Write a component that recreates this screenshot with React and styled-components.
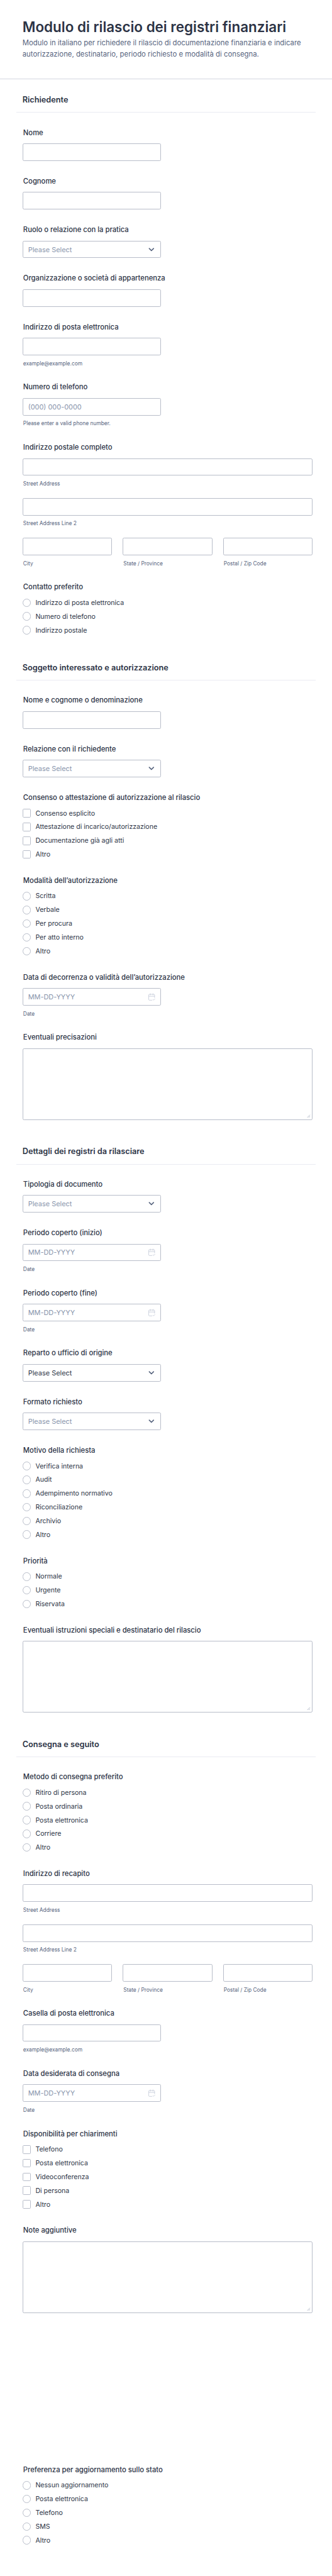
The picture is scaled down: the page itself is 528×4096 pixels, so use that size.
import React from "react";
import styled, { createGlobalStyle } from "styled-components";
import { CalendarCheck2, ChevronDown } from "lucide-react";

// reference px -> window px
const u = (n) => `${(n * 0.5675).toFixed(2)}px`;

const GlobalStyle = createGlobalStyle`
  * { box-sizing: border-box; }
  html, body { margin: 0; padding: 0; background: #fff; }
  body { font-family: "Inter", "Liberation Sans", sans-serif; color: #2c3345; }
`;

const Page = styled.main`
  width: 100%;
  padding-bottom: ${u(76)};
`;

const Header = styled.header`
  padding: ${u(53)} ${u(45)} ${u(51)} ${u(63)};
  border-bottom: 1px solid #d3d6e0;
`;

const Title = styled.h1`
  margin: 0 0 ${u(6.5)};
  font-size: ${u(39.5)};
  line-height: ${u(45)};
  font-weight: 600;
  color: #2c3345;
`;

const Description = styled.p`
  margin: 0;
  font-size: ${u(20)};
  line-height: ${u(32)};
  color: #57647e;
`;

const Form = styled.form`
  display: flex;
  flex-direction: column;
  padding: ${u(16)} ${u(46)} 0 ${u(45)};
`;

const SectionTitle = styled.h2`
  margin: ${u(27.5)} 0 ${u(44.5)};
  padding: 0 0 ${u(19.5)} ${u(18)};
  font-size: ${u(22.4)};
  line-height: ${u(30)};
  font-weight: 600;
  color: #2c3345;
  border-bottom: 1px solid #eaebf2;
`;

const Field = styled.div`
  margin: ${(p) => u(p.$offset || 0)} ${u(8.5)} ${u(45.7)} ${u(18)};
`;

const Label = styled.label`
  display: block;
  margin: 0 0 ${u(17.5)} ${u(2)};
  font-size: ${u(19.8)};
  line-height: ${u(24)};
  font-weight: 500;
  color: #2c3345;
`;

const Hint = styled.div`
  margin: ${u(15.5)} 0 0 ${u(2)};
  padding-bottom: ${u(1)};
  font-size: ${u(14.75)};
  line-height: ${u(16)};
  color: #57647e;
`;

const Control = styled.div`
  display: flex;
  align-items: center;
  justify-content: space-between;
  width: ${(p) => (p.$wide ? "100%" : u(389))};
  height: ${u(49)};
  padding: 0 ${u(14)};
  background: #fff;
  border: 1px solid #b8bdc9;
  border-radius: ${u(4)};
`;

const TextInput = styled.input`
  flex: 1;
  width: 100%;
  min-width: 0;
  height: 100%;
  padding: 0;
  border: 0;
  outline: 0;
  background: transparent;
  font: inherit;
  font-size: ${u(19.3)};
  color: #2c3345;

  &::placeholder {
    color: #8894ab;
    opacity: 1;
  }
`;

const SelectText = styled.span`
  font-size: ${u(19.3)};
  color: ${(p) => (p.$filled ? "#2c3345" : "#8894ab")};
`;

const TextAreaBox = styled.div`
  position: relative;
  height: ${u(201)};
  border: 1px solid #b8bdc9;
  border-radius: ${u(4)};
`;

const TextArea = styled.textarea`
  display: block;
  width: 100%;
  height: 100%;
  border: 0;
  outline: 0;
  resize: none;
  background: transparent;
`;

const Grip = styled.svg`
  position: absolute;
  right: ${u(4)};
  bottom: ${u(4)};
  width: ${u(10)};
  height: ${u(10)};
`;

const AddressRow = styled.div`
  margin-bottom: ${u(30)};
`;

const AddressColumns = styled.div`
  display: grid;
  grid-template-columns: repeat(3, minmax(0, 1fr));
  column-gap: ${u(30)};
`;

const OptionList = styled.div`
  display: flex;
  flex-direction: column;
  gap: ${u(14.5)};
  margin-top: ${u(19)};
  padding-bottom: ${u(4.5)};
`;

const OptionLabel = styled.div`
  display: flex;
  align-items: center;
  gap: ${u(12.5)};
  height: ${u(24)};
  font-size: ${u(18.6)};
  color: #2c3345;
`;

const OptionMark = styled.span`
  flex: none;
  width: ${u(24)};
  height: ${u(24)};
  background: #fff;
  border: 1px solid #b8bdc9;
  border-radius: ${(p) => (p.$round ? "50%" : u(3))};
`;

const GroupLabel = styled(Label)`
  margin-bottom: 0;
`;

const Line = ({ label, hint, placeholder, offset }) => (
  <Field $offset={offset}>
    <Label>{label}</Label>
    <Control>
      <TextInput placeholder={placeholder} aria-label={label} />
    </Control>
    {hint && <Hint>{hint}</Hint>}
  </Field>
);

const Select = ({ label, filled }) => (
  <Field>
    <Label>{label}</Label>
    <Control>
      <SelectText $filled={filled}>Please Select</SelectText>
      <ChevronDown size={13.6} strokeWidth={3} color="#57647e" />
    </Control>
  </Field>
);

const DateField = ({ label }) => (
  <Field>
    <Label>{label}</Label>
    <Control>
      <TextInput placeholder="MM-DD-YYYY" aria-label={label} />
      <CalendarCheck2 size={12.4} strokeWidth={1.6} color="#c3cad8" />
    </Control>
    <Hint>Date</Hint>
  </Field>
);

const Notes = ({ label }) => (
  <Field>
    <Label>{label}</Label>
    <TextAreaBox>
      <TextArea aria-label={label} />
      <Grip viewBox="0 0 10 10">
        <path d="M1 9 9 1M5 9l4-4" stroke="#8894ab" strokeWidth="1" fill="none" />
      </Grip>
    </TextAreaBox>
  </Field>
);

const Options = ({ label, items, round, offset }) => (
  <Field $offset={offset}>
    <GroupLabel>{label}</GroupLabel>
    <OptionList>
      {items.map((item) => (
        <OptionLabel key={item}>
          <OptionMark $round={round} />
          {item}
        </OptionLabel>
      ))}
    </OptionList>
  </Field>
);

const Address = ({ label }) => (
  <Field>
    <Label>{label}</Label>
    <AddressRow>
      <Control $wide>
        <TextInput aria-label="Street Address" />
      </Control>
      <Hint>Street Address</Hint>
    </AddressRow>
    <AddressRow>
      <Control $wide>
        <TextInput aria-label="Street Address Line 2" />
      </Control>
      <Hint>Street Address Line 2</Hint>
    </AddressRow>
    <AddressColumns>
      {["City", "State / Province", "Postal / Zip Code"].map((part) => (
        <div key={part}>
          <Control $wide>
            <TextInput aria-label={part} />
          </Control>
          <Hint>{part}</Hint>
        </div>
      ))}
    </AddressColumns>
  </Field>
);

export default function App() {
  return (
    <Page>
      <GlobalStyle />
      <Header>
        <Title>Modulo di rilascio dei registri finanziari</Title>
        <Description>
          Modulo in italiano per richiedere il rilascio di documentazione finanziaria e indicare
          autorizzazione, destinatario, periodo richiesto e modalità di consegna.
        </Description>
      </Header>
      <Form>
        <SectionTitle>Richiedente</SectionTitle>
        <Line label="Nome" />
        <Line label="Cognome" />
        <Select label="Ruolo o relazione con la pratica" />
        <Line label="Organizzazione o società di appartenenza" />
        <Line label="Indirizzo di posta elettronica" hint="example@example.com" />
        <Line label="Numero di telefono" placeholder="(000) 000-0000" hint="Please enter a valid phone number." />
        <Address label="Indirizzo postale completo" />
        <Options
          round
          label="Contatto preferito"
          items={["Indirizzo di posta elettronica", "Numero di telefono", "Indirizzo postale"]}
        />

        <SectionTitle>Soggetto interessato e autorizzazione</SectionTitle>
        <Line label="Nome e cognome o denominazione" />
        <Select label="Relazione con il richiedente" />
        <Options
          label="Consenso o attestazione di autorizzazione al rilascio"
          items={["Consenso esplicito", "Attestazione di incarico/autorizzazione", "Documentazione già agli atti", "Altro"]}
        />
        <Options
          round
          label="Modalità dell’autorizzazione"
          items={["Scritta", "Verbale", "Per procura", "Per atto interno", "Altro"]}
        />
        <DateField label="Data di decorrenza o validità dell’autorizzazione" />
        <Notes label="Eventuali precisazioni" />

        <SectionTitle>Dettagli dei registri da rilasciare</SectionTitle>
        <Select label="Tipologia di documento" />
        <DateField label="Periodo coperto (inizio)" />
        <DateField label="Periodo coperto (fine)" />
        <Select filled label="Reparto o ufficio di origine" />
        <Select label="Formato richiesto" />
        <Options
          round
          label="Motivo della richiesta"
          items={["Verifica interna", "Audit", "Adempimento normativo", "Riconciliazione", "Archivio", "Altro"]}
        />
        <Options round label="Priorità" items={["Normale", "Urgente", "Riservata"]} />
        <Notes label="Eventuali istruzioni speciali e destinatario del rilascio" />

        <SectionTitle>Consegna e seguito</SectionTitle>
        <Options
          round
          label="Metodo di consegna preferito"
          items={["Ritiro di persona", "Posta ordinaria", "Posta elettronica", "Corriere", "Altro"]}
        />
        <Address label="Indirizzo di recapito" />
        <Line label="Casella di posta elettronica" hint="example@example.com" />
        <DateField label="Data desiderata di consegna" />
        <Options
          label="Disponibilità per chiarimenti"
          items={["Telefono", "Posta elettronica", "Videoconferenza", "Di persona", "Altro"]}
        />
        <Notes label="Note aggiuntive" />
        <Options
          round
          offset={382}
          label="Preferenza per aggiornamento sullo stato"
          items={["Nessun aggiornamento", "Posta elettronica", "Telefono", "SMS", "Altro"]}
        />
      </Form>
    </Page>
  );
}
